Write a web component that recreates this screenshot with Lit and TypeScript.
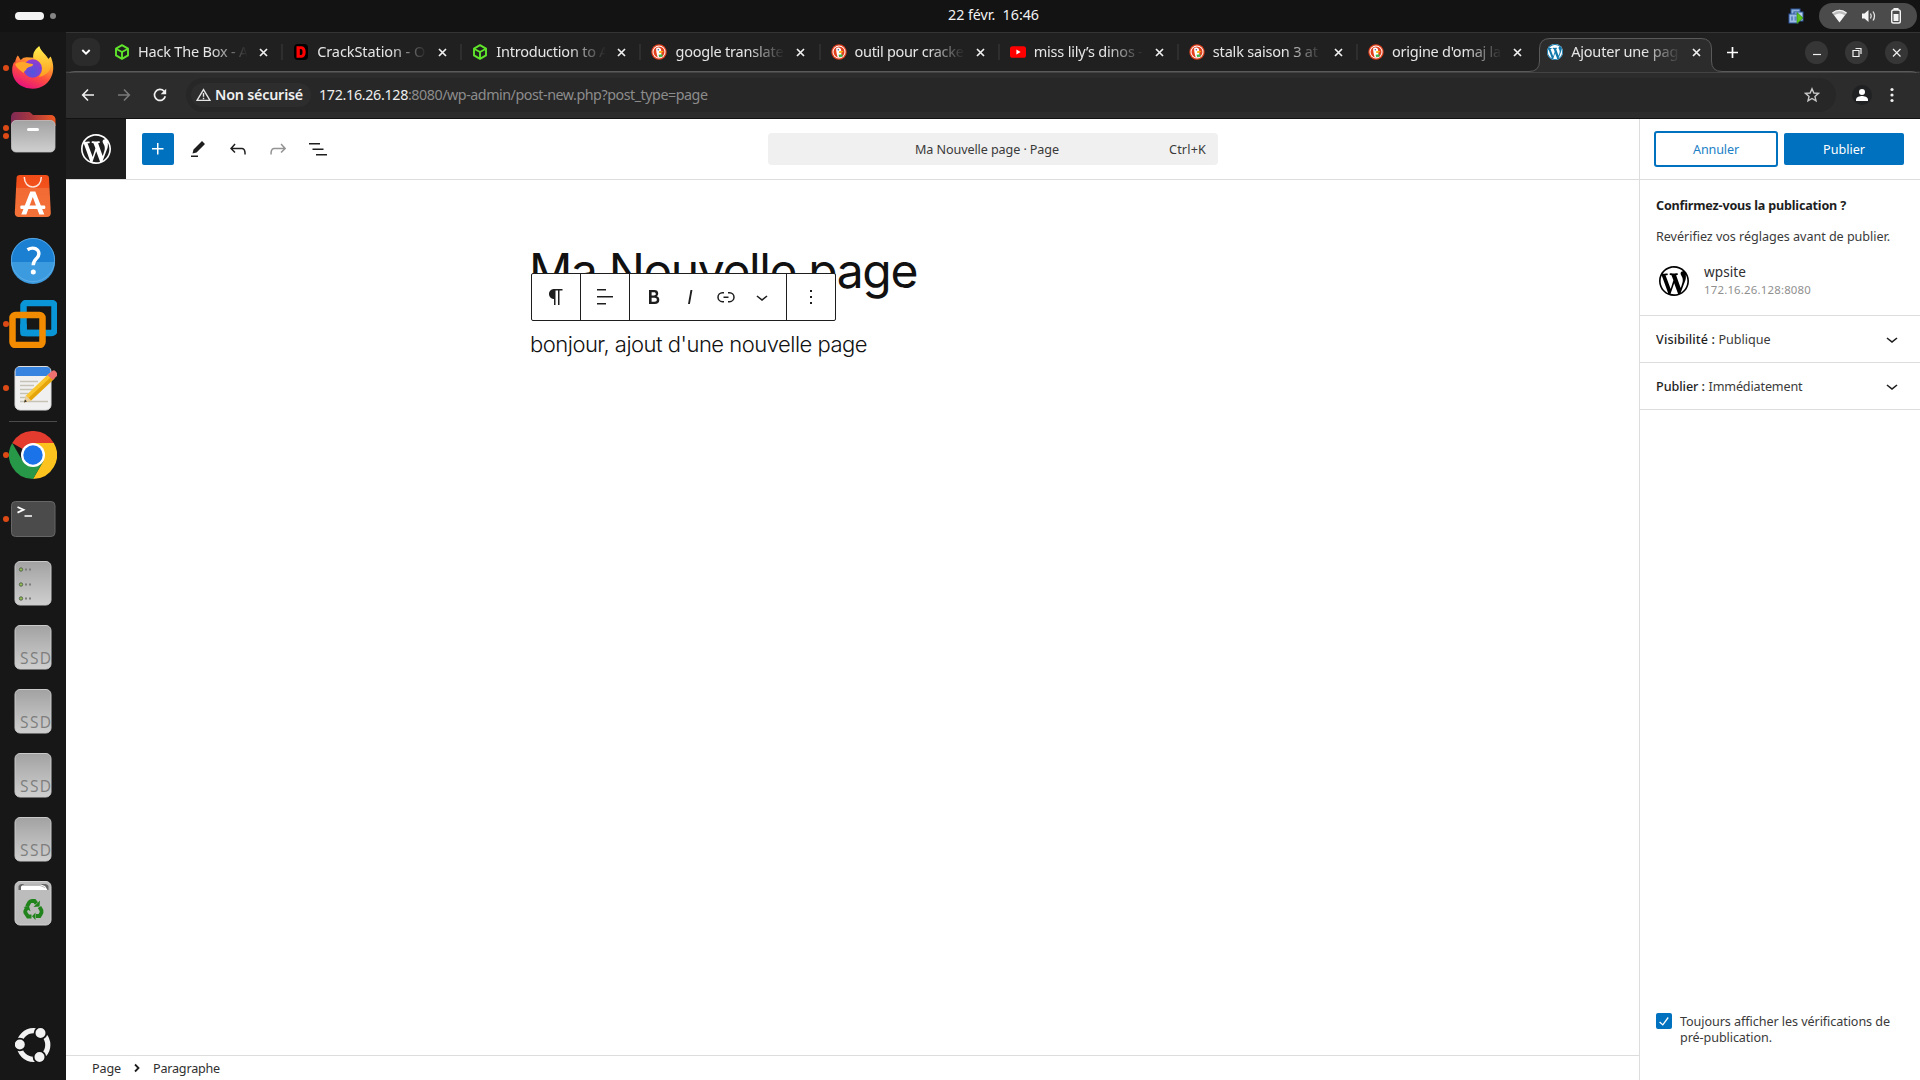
import { LitElement, html, css, svg } from "lit";
import { customElement, property } from "lit/decorators.js";
import { classMap } from "lit/directives/class-map.js";

const WP =
  "M20 10c0-5.51-4.49-10-10-10C4.48 0 0 4.49 0 10c0 5.52 4.48 10 10 10 5.51 0 10-4.48 10-10zM7.78 15.37L4.37 6.22c.55-.02 1.17-.08 1.17-.08.5-.06.44-1.13-.06-1.11 0 0-1.45.11-2.37.11-.18 0-.37 0-.58-.01C4.12 2.69 6.87 1.11 10 1.11c2.33 0 4.45.87 6.05 2.34-.68-.11-1.65.39-1.65 1.58 0 .74.45 1.36.9 2.1.35.61.55 1.36.55 2.46 0 1.49-1.4 5-1.4 5l-3.03-8.37c.54-.02.82-.17.82-.17.5-.05.44-1.25-.06-1.22 0 0-1.44.12-2.38.12-.87 0-2.33-.12-2.33-.12-.5-.03-.56 1.2-.06 1.22l.92.08 1.26 3.41zM17.41 10c.24-.64.74-1.87.43-4.25.7 1.29 1.05 2.71 1.05 4.25 0 3.29-1.73 6.24-4.4 7.78.97-2.59 1.94-5.2 2.92-7.78zM6.1 18.09C3.12 16.65 1.11 13.53 1.11 10c0-1.3.23-2.48.72-3.59C3.25 10.3 4.67 14.2 6.1 18.09zm4.03-6.63l2.58 6.98c-.86.29-1.76.45-2.71.45-.79 0-1.57-.11-2.29-.33.81-2.38 1.62-4.74 2.42-7.1z";

const P: Record<string, string> = {
  plus: "M11 12.5V17.5H12.5V12.5H17.5V11H12.5V6H11V11H6V12.5H11Z",
  edit: "m19 7-3-3-8.5 8.5-1 4 4-1L19 7Zm-7 11.5H5V20h7v-1.5Z",
  undo: "M18.3 11.7c-.6-.6-1.4-.9-2.3-.9H6.7l2.9-3.3-1.1-1-4.5 5L8.5 16l1-1-2.7-2.7H16c.5 0 .9.2 1.3.5 1 1 1 3.4 1 4.5v.3h1.5v-.2c0-1.5 0-4.3-1.5-5.7z",
  redo: "M15.6 6.5l-1.1 1 2.9 3.3H8c-.9 0-1.7.3-2.3.9-1.4 1.5-1.4 4.2-1.4 5.6v.2h1.5v-.3c0-1.1 0-3.5 1-4.5.3-.3.7-.5 1.3-.5h9.2L14.5 15l1.1 1.1 4.6-4.6-4.6-5z",
  list: "M3 6h11v1.5H3V6Zm3.5 5.5h11V13h-11v-1.5ZM21 17H10v1.5h11V17Z",
  paragraph: "m9.99609 14v-.2251l.00391.0001v6.225h1.5v-14.5h2.5v14.5h1.5v-14.5h3v-1.5h-8.50391c-2.76142 0-5 2.23858-5 5 0 2.7614 2.23858 5 5 5z",
  align: "M13 5.5H4V4h9v1.5Zm7 7H4V11h16v1.5Zm-7 7H4V18h9v1.5Z",
  bold: "M14.7 11.3c1-.6 1.5-1.6 1.5-3 0-2.3-1.3-3.4-4-3.4H7v14h5.8c1.4 0 2.5-.3 3.3-1 .8-.7 1.2-1.7 1.2-2.9.1-1.9-.8-3.1-2.6-3.7zm-5.1-4h2.3c.6 0 1.1.1 1.4.4.3.3.5.7.5 1.2s-.2 1-.5 1.2c-.3.3-.8.4-1.4.4H9.6V7.3zm4.6 9c-.4.3-1 .4-1.7.4H9.6v-3.9h2.9c.7 0 1.3.2 1.7.5.4.3.6.8.6 1.5s-.2 1.2-.6 1.5z",
  italic: "M12.5 5L10 19h1.9l2.5-14z",
  link: "M10 17.389H8.444A5.194 5.194 0 1 1 8.444 7H10v1.5H8.444a3.694 3.694 0 0 0 0 7.389H10v1.5ZM14 7h1.556a5.194 5.194 0 0 1 0 10.39H14v-1.5h1.556a3.694 3.694 0 0 0 0-7.39H14V7Zm-4.5 6h5v-1.5h-5V13Z",
  down: "M17.5 11.6L12 16l-5.5-4.4.9-1.2L12 14l4.5-3.6 1 1.2z",
  more: "M13 19h-2v-2h2v2zm0-6h-2v-2h2v2zm0-6h-2V5h2v2z",
};

const icon = (name: string, size = 24) =>
  html`<svg width=${size} height=${size} viewBox="0 0 24 24" fill="currentColor"><path d=${P[name]} /></svg>`;

const wpLogo = (size: number) =>
  html`<svg width=${size} height=${size} viewBox="0 0 20 20" fill="currentColor"><path d=${WP} /></svg>`;

/** A single line of text tracked so that it spans exactly `w` pixels. */
@customElement("fit-label")
export class FitLabel extends LitElement {
  @property() text = "";
  @property({ type: Number }) w = 0;
  static styles = css`
    :host { display: inline-block; white-space: pre; flex: none; }
  `;
  firstUpdated() {
    const span = this.renderRoot.querySelector("span")!;
    const natural = span.getBoundingClientRect().width;
    span.style.letterSpacing = `${(this.w - natural) / this.text.length}px`;
  }
  render() {
    return html`<span>${this.text}</span>`;
  }
}

const t = (text: string, w: number, cls = "") =>
  html`<fit-label class=${cls} .text=${text} .w=${w}></fit-label>`;

const fav: Record<string, unknown> = {
  htb: svg`<g fill="none" stroke="#5fe52b" stroke-width="1.9" stroke-linejoin="round"><path d="M8 1.2 14 4.6V11.4L8 14.8 2 11.4V4.6Z"/><path d="M2.4 5 8 8 13.6 5M8 8v6.4"/></g>`,
  crack: svg`<rect x="1" y="0" width="14" height="16" rx="4" fill="#000"/><path d="M3.500 2.200h4.700c2.900 0 4.500 1.900 4.500 5.800s-1.600 5.800-4.500 5.800h-4.700zM6.800 5v6.100h.9c1.300 0 1.800-.9 1.800-3.100s-.5-3-1.800-3z" fill="#f00" fill-rule="evenodd"/>`,
  duck: svg`<circle cx="8" cy="8" r="7.700" fill="#e2401c"/><circle cx="8" cy="8" r="6.500" fill="#fff"/><circle cx="8" cy="8" r="5.500" fill="#e2401c"/><path d="M5.200 4.200c1-1.200 3.800-1 4.600.8.700 1.600.3 3 .5 4.500l.4 3.400c-1.400.6-2.700.7-4 .3C6 10.700 4.800 6.600 5.200 4.200Z" fill="#fff"/><path d="M8 7.400c1.300-.6 3-.6 4.300 0-.8.8-2.200 1.500-4.100 1.500z" fill="#fdb813"/><circle cx="7.300" cy="5.700" r=".7" fill="#2d4f8e"/><path d="m7.600 10.800 3.700-.6.200 2.500-3.400.4z" fill="#35b54a"/>`,
  yt: svg`<rect x="0" y="2.200" width="16" height="11.600" rx="2.600" fill="#f00"/><path d="M6.400 5.600 10.600 8l-4.200 2.400z" fill="#fff"/>`,
  wp: svg`<circle cx="8" cy="8" r="8" fill="#fff"/><g transform="scale(.8)" fill="#1178ac"><path d=${WP}/></g>`,
};

const TABS: [string, string, number][] = [
  ["htb", "Hack The Box - A", 110],
  ["crack", "CrackStation - O", 108],
  ["htb", "Introduction to A", 112],
  ["duck", "google translate", 108],
  ["duck", "outil pour cracke", 109],
  ["yt", "miss lily’s dinos -", 109],
  ["duck", "stalk saison 3 at", 105],
  ["duck", "origine d'omaj la", 109],
  ["wp", "Ajouter une pag", 107],
];

const box = (body: unknown, w = 48) =>
  html`<svg width=${w} height="48" viewBox="0 0 48 48">${body}</svg>`;

const DRIVE = svg`<rect x="6" y="2.500" width="36" height="43.500" rx="5" fill="url(#gs)" stroke="#c9c9c9"/>`;
const GS = svg`<defs><linearGradient id="gs" x1="0" y1="0" x2="0" y2="1"><stop offset="0" stop-color="#a2a2a2"/><stop offset="1" stop-color="#cfcfcf"/></linearGradient></defs>`;
const ssd = svg`${GS}${DRIVE}<text x="11" y="41" font-family="Open Sans, sans-serif" font-size="15.500" textLength="31" fill="#7e7e7e">SSD</text>`;

const DOCK: { dots: number; art: unknown }[] = [
  { dots: 1, art: svg`
    <defs>
      <linearGradient id="ff" x1=".8" y1="0" x2=".35" y2="1"><stop offset="0" stop-color="#fff44f"/><stop offset=".35" stop-color="#ffa52a"/><stop offset=".65" stop-color="#ff4f3e"/><stop offset="1" stop-color="#e8127c"/></linearGradient>
      <radialGradient id="fp" cx=".5" cy=".7" r=".7"><stop offset="0" stop-color="#4f55dd"/><stop offset="1" stop-color="#9838cf"/></radialGradient>
      <linearGradient id="fy" x1="0" y1="0" x2="0" y2="1"><stop offset="0" stop-color="#fff04d"/><stop offset="1" stop-color="#ff9a20"/></linearGradient>
    </defs>
    <g transform="translate(-.8 0)"><path d="M9.500 11.500c1.600 1.200 1.700 3 3 4.500 1.800-2.200 4-2.700 6-2.800l8 .6 4-11.300c2 4.500 7.500 8 9.500 12.500l2.500-2.500c2.500 6 3.500 12 1.500 18-3 9-10.500 14.200-19.500 14.200C13 44.700 4 37 4 26c0-4 1-6.500 2.300-8.500l.5 2c.3-3.500 1-5.500 2.700-8Z" fill="url(#ff)"/>
    <path d="M31 2c-3.500 3-6.500 6-6 12 4 1.500 8 5 8.500 10.500.2 3-1 6-3 8.500 6-1 12-5 12-12-.5-7-9-11-11.500-19Z" fill="url(#fy)"/>
    <circle cx="24.500" cy="24.500" r="9.300" fill="url(#fp)"/>
    <path d="M7 20c4-2.500 8-3 12-1 3 .8 5.500.5 6 1.500-.5 2.500-6 2-7 5-1 1.500-2 1.500-2.500 3.500C12 26 8 24 7 20Z" fill="#ffa62b"/></g>` },
  { dots: 2, art: svg`
    <defs><linearGradient id="fo"><stop offset="0" stop-color="#7e2a55"/><stop offset=".45" stop-color="#a8373f"/><stop offset="1" stop-color="#f15a22"/></linearGradient></defs>
    <path d="M2 18V9c0-3 2-5 4.500-5h13c1.500 0 2 .5 3 1.600L24 7h17.500c3 0 5 2 5 4.500V18Z" fill="url(#fo)"/>
    ${GS}<rect x="2.500" y="12.500" width="43.500" height="31.500" rx="4.500" fill="url(#gs)" stroke="#c2c2c2" stroke-width=".8"/>
    <rect x="18" y="20" width="12" height="3" rx="1.500" fill="#fff"/>` },
  { dots: 0, art: svg`
    <defs><linearGradient id="ac" x1="0" y1="0" x2="0" y2="1"><stop offset="0" stop-color="#f04c17"/><stop offset=".3" stop-color="#f2521d"/><stop offset=".32" stop-color="#f26a34"/><stop offset="1" stop-color="#f47238"/></linearGradient></defs>
    <g transform="translate(-.7 0)"><path d="M11.500 3h26c2 0 3 1 3.200 2.800L42.500 41c0 2.500-1.500 4-4 4h-28c-2.500 0-4-1.500-4-4L8.300 5.800C8.500 4 9.500 3 11.500 3Z" fill="url(#ac)"/>
    <path d="M16 5c0 6 3.500 10 8.500 10S33 11 33 5" fill="none" stroke="#fbe3d8" stroke-width="1.500"/>
    <path d="M22 19.500h5l9 23h-5L24.500 25 18 42.500h-5Z" fill="#fff"/><rect x="12" y="33.500" width="25" height="3.500" rx="1.200" fill="#fff"/></g>` },
  { dots: 0, art: svg`
    <circle cx="24" cy="24" r="22" fill="#1c80d2"/><path d="M2 26a22 22 0 0 0 44 0Z" fill="#3c9ade"/><circle cx="24" cy="24" r="21.600" fill="none" stroke="#63b0e8" stroke-width=".8"/>
    <path d="M18.500 13.800c3-1.900 6-2.100 8.500-.9 3.500 1.800 3.700 6 1 9-2.300 2.400-3.800 3.500-3.800 7.300" fill="none" stroke="#fff" stroke-width="3.400"/><circle cx="24.300" cy="36" r="2.500" fill="#fff"/>` },
  { dots: 1, art: svg`
    <rect x="14.500" y="3" width="31" height="30" rx="3" fill="none" stroke="#0a95d6" stroke-width="6.500"/>
    <rect x="3.500" y="15" width="30" height="30" rx="3" fill="none" stroke="#f38b00" stroke-width="6.500"/>
    <path d="M14.500 24v9H30" fill="none" stroke="#0a95d6" stroke-width="6.500" stroke-linejoin="round"/>` },
  { dots: 1, art: svg`
    <rect x="6" y="2.500" width="36" height="43.500" rx="5" fill="#f0f0f0" stroke="#ddd"/><path d="M6.500 12V7q0-4 4-4h27q4 0 4 4v5Z" fill="#3684e0"/>
    <path d="M11 17.500h18M11 21.500h14M11 25.500h17M11 29.500h11M11 33.500h10M11 37.500h28" stroke="#c6c2b5" stroke-width="1.500"/>
    <path d="m15 38.500 2-7L40.500 9l5 5.500-23.500 22Z" fill="#f9c62e"/><path d="m19.500 34 23.500-22 2.500 2.500-23.500 22Z" fill="#e5a50a"/><path d="m15 38.500 2-7 5 5Z" fill="#e8cfa2"/><path d="m15 38.500 1-3 2 2Z" fill="#333"/>
    <path d="m38.500 11 5-4.300q1.500-1 2.800.2l2 2.500q1 1.300-.2 2.500L43.500 16Z" fill="#ef7070"/>` },
  { dots: 1, art: svg`
    <path d="M24 24 3.200 12A24 24 0 0 1 44.800 12Z" fill="#e33b2e"/><path d="M24 12H44.800A24 24 0 0 1 24 48l10.400-18Z" fill="#fcc31e"/><path d="M3.200 12 13.600 30 24 36h4.500L24 48A24 24 0 0 1 3.200 12Z" fill="#279847"/>
    <path d="M24 48 34.400 30 24 34Z" fill="#279847"/><circle cx="24" cy="24" r="12" fill="#fff"/><circle cx="24" cy="24" r="9.700" fill="#1a73e8"/>` },
  { dots: 1, art: svg`
    <rect x="2.500" y="6.500" width="43.500" height="35" rx="4" fill="#4b4b4b" stroke="#666"/>
    <path d="m8.500 12 6 2.800-6 2.800" fill="none" stroke="#fff" stroke-width="1.800"/><path d="M15.500 21h7.500" stroke="#fff" stroke-width="1.500"/>` },
  { dots: 0, art: svg`${GS}${DRIVE}${[10.5, 25.5, 39.5].map(
    (y) => svg`<circle cx="12" cy=${y} r="1.700" fill="#8cc152" stroke="#5a6350" stroke-width="1"/><path d=${`M16 ${y}h2M20 ${y}h2`} stroke="#7d7d7d" stroke-width="2"/>`
  )}` },
  { dots: 0, art: ssd },
  { dots: 0, art: ssd },
  { dots: 0, art: ssd },
  { dots: 0, art: ssd },
  { dots: 0, art: svg`${GS}<rect x="6" y="2.500" width="36" height="43.500" rx="5" fill="#bcbcbc" stroke="#d2d2d2"/>
    <path d="M9.500 11V7.500Q10 5 13 5h23q3 0 3.500 2.500V11Z" fill="#666"/><path d="M12 11V7.500l3-2h17l4 1.500 2.500 4Z" fill="#fff"/><path d="M14 6.500h17l5 2" stroke="#aaa" fill="none" stroke-width=".8"/>
    <g fill="none" stroke="#21831c" stroke-width="3.800"><path d="m18 27.500 2.500-4.500q1-1 2.500-1h2.500l2 2.500"/><path d="m30.500 28 2 3.500q.5 2-1 4l-1 1.500h-3.500"/><path d="M22.500 37.500H19l-2.700-4q-.3-1.500.7-3l1.500-2.500"/></g>
    <path d="m24.500 28 6-.5.500-6ZM26.500 33.500v7.500l-3.500-3.700ZM14.500 28l5.500-.8 1.500 5Z" fill="#21831c"/>` },
];

@customElement("app-root")
export class AppRoot extends LitElement {
  static styles = css`
    :host { display: block; width: 1920px; height: 1080px; overflow: hidden; background: #161616; color: #1e1e1e;
      font: 12.600px/20px "Noto Sans", "Open Sans", sans-serif; }
    * { box-sizing: border-box; }
    svg { display: block; flex: none; }
    .topbar { height: 32px; background: #131313; display: grid; grid-template-columns: 1fr auto 1fr; align-items: center; color: #f2f2f2; font-size: 14.300px; }
    .spaces { display: flex; align-items: center; gap: 6px; padding-left: 15px; }
    .pill { width: 29px; height: 8px; border-radius: 4px; background: #f4f4f4; }
    .dot { width: 6px; height: 6px; border-radius: 3px; background: #858585; }
    .clock { padding: 0 0 3px 67px; }
    .tray { display: flex; justify-content: flex-end; align-items: center; gap: 14px; padding-right: 3px; }
    .status { width: 98px; height: 26px; border-radius: 13px; background: #4b4b4b; display: flex; align-items: center; justify-content: space-between; padding: 0 15px 0 12px; }
    .body { display: flex; height: 1048px; }
    .dock { width: 66px; background: #171717; display: flex; flex-direction: column; padding-top: 4px; }
    .app { height: 64px; display: flex; align-items: center; flex: none; }
    .marks { width: 9px; display: flex; flex-direction: column; gap: 2px; align-items: flex-end; }
    .mark { width: 6px; height: 6px; border-radius: 3px; background: #dc4a16; }
    .rule { height: 1px; margin: 1px 9px 1px; background: #4b4b4b; flex: none; }
    .ubuntu { margin-top: auto; padding: 0 0 17px 15px; }
    .win { flex: 1; display: flex; flex-direction: column; min-width: 0; background: #202020; }
    .strip { height: 39px; border-top: 1px solid #343434; background: #202020; display: flex; align-items: center; position: relative; padding-left: 6px; flex: none; }
    .finder { width: 28px; height: 28px; border-radius: 9px; background: #2b2b2b; display: grid; place-items: center; margin-right: 4px; color: #fff; }
    .shape { position: absolute; left: 0; top: 0; }
    .tab { width: 179.150px; height: 28px; padding-left: 10px; display: flex; align-items: center; position: relative; font-size: 14.500px; color: #e6e6e6; flex: none; }
    .tick { width: 2px; height: 16px; background: #2e2e2e; margin-left: auto; }
    .tick.off { background: transparent; }
    .title { width: 112px; margin: -2px 9px 0 8px; overflow: hidden; -webkit-mask-image: linear-gradient(90deg, #000 65%, transparent 98%); mask-image: linear-gradient(90deg, #000 65%, transparent 98%); }
    .newtab { margin-left: 11px; position: relative; }
    .ctrls { margin-left: auto; display: flex; gap: 17px; padding-right: 12px; position: relative; }
    .ctrl { width: 23px; height: 23px; border-radius: 50%; background: #363636; }
    .nav { height: 48px; background: #2c2c2c; border-bottom: 1px solid #121212; display: flex; align-items: center; padding: 1px 0 0 14px; flex: none; }
    .navs { display: flex; gap: 20px; }
    .omni { width: 1650px; height: 34px; border-radius: 17px; margin-left: 18px; background: #272727; display: flex; align-items: center; padding: 0 16px 0 5px; font-size: 14.300px; color: #8c8c8c; }
    .chip { width: 120px; height: 24px; border-radius: 12px; background: #2d2d2d; display: flex; align-items: center; gap: 4px; padding-left: 5px; margin-right: 8px; color: #f0f0f0; }
    .medium { font-weight: 600; }
    .host { color: #eee; }
    .star { margin-left: auto; }
    .avatar { width: 20px; height: 20px; border-radius: 10px; background: #202122; margin: 0 18px 0 16px; }
    .wp { flex: 1; display: flex; background: #fff; min-height: 0; }
    .main { width: 1573px; display: flex; flex-direction: column; }
    .head { height: 61px; border-bottom: 1px solid #ddd; display: flex; align-items: center; flex: none; }
    .home { width: 60px; height: 60px; background: #1e1e1e; color: #fff; display: grid; place-items: center; align-self: flex-start; }
    .tools { display: flex; gap: 8px; margin-left: 16px; align-self: flex-start; padding-top: 14px; }
    .btn { width: 32px; height: 32px; display: grid; place-items: center; }
    .add { background: #0071be; color: #fff; border-radius: 2px; }
    .faint { color: #949494; }
    .cmd fit-label, .foot fit-label, .acts fit-label, .intro > fit-label, .row fit-label { margin: 1px 0 -1px; }
    .cmd { width: 450px; height: 32px; margin: 14px 0 0 434px; align-self: flex-start; background: #f0f0f0; border-radius: 4px; display: flex; align-items: center; padding: 0 12px 0 147px; justify-content: space-between; color: #3a3a3a; }
    .canvas { flex: 1; padding-left: 465px; position: relative; color: #111; font-family: Inter, sans-serif; }
    .h1 { font-size: 48px; line-height: 56px; padding-top: 63px; margin-left: -2px; font-weight: 400; height: 119px; }
    .para { font-size: 22px; line-height: 30px; font-weight: 300; margin: 30px 0 0 -1px; height: 30px; }
    .block { position: absolute; left: 465px; top: 93px; height: 48px; display: flex; border: 1px solid #1e1e1e; border-radius: 2px; background: #fff; color: #1e1e1e; }
    .seg { display: flex; align-items: center; justify-content: center; width: 48px; gap: 12px; box-sizing: content-box; }
    .seg.wide { width: 156px; }
    .seg + .seg { border-left: 1px solid #1e1e1e; }
    .foot { height: 25px; border-top: 1px solid #ddd; display: flex; align-items: center; padding-left: 26px; color: #2f2f2f; }
    .side { flex: 1; border-left: 1px solid #ddd; display: flex; flex-direction: column; color: #3a3a3a; }
    .acts { height: 61px; border-bottom: 1px solid #ddd; padding: 12px 0 0 14px; display: flex; gap: 6px; flex: none; }
    .cancel { width: 124px; height: 36px; border: 2px solid #0071be; border-radius: 3px; color: #1b7fc6; display: flex; justify-content: center; align-items: center; }
    .pub { width: 120px; height: 32px; margin-top: 2px; background: #0071be; color: #fff; border-radius: 2px; display: flex; justify-content: center; align-items: center; }
    .intro { height: 136px; padding: 15px 0 0 16px; border-bottom: 1px solid #ddd; flex: none; display: flex; flex-direction: column; }
    .bold { font-weight: 700; color: #1e1e1e; }
    .intro > .second { margin-top: 12px; }
    .site { display: flex; gap: 15px; padding: 17px 0 0 3px; align-items: center; color: #000; height: 52px; }
    .names { display: flex; flex-direction: column; color: #2f2f2f; margin-top: -1px; }
    .name { font-size: 13.600px; line-height: 18px; }
    .addr { font-size: 11.400px; line-height: 17px; color: #8f8f8f; }
    .row { height: 47px; border-bottom: 1px solid #ddd; display: flex; align-items: center; padding: 0 16px; flex: none; }
    .row .chev { margin-left: auto; color: #1e1e1e; }
    .dark { font-weight: 500; color: #1e1e1e; }
    .value { padding-left: 3.500px; }
    .opt { margin-top: auto; display: flex; gap: 8px; padding: 0 16px 34px; line-height: 16px; }
    .cb { width: 16px; height: 16px; border-radius: 2px; background: #0071be; margin-top: -1px; }
    .lines { display: flex; flex-direction: column; }
  `;

  private topbar() {
    return html`<div class="topbar">
      <div class="spaces"><div class="pill"></div><div class="dot"></div></div>
      <div class="clock">${t("22 févr.  16:46", 91)}</div>
      <div class="tray">
        <svg width="17" height="16" viewBox="0 0 17 16">
          <rect x="3" y="1" width="9" height="9" fill="#8fb0dd" stroke="#2c569a" /><rect x="6" y="4" width="9" height="9" fill="#b5cdec" stroke="#2c569a" />
          <rect x="1" y="6" width="9" height="9" fill="#9dbbe4" stroke="#2c569a" /><path d="M3 8.500h2v4H3zM6.500 8.500h2v4h-2z" fill="#5e87c4" /><path d="m9 4.500 6 5.500-6 5.500z" fill="#5fc41b" stroke="#2c8a0b" stroke-width=".6" />
        </svg>
        <div class="status">
          <svg width="17" height="16" viewBox="0 0 17 16"><path d="M1 4.800Q8.500-1.200 16 4.800L8.500 14.500Z" fill="#bdbdbd" /><path d="M1.500 5Q8.500-.2 15.500 5" stroke="#f4f4f4" fill="none" stroke-width="1.400" /><path d="M3.300 7.300q5.200-3.500 10.400 0L8.500 14.300Z" fill="#f4f4f4" /></svg>
          <svg width="16" height="16" viewBox="0 0 16 16"><path d="M1 5.500h2.500L7.500 2v12l-4-3.500H1Z" fill="#f4f4f4" /><path d="M9.500 5.500q1.500 2.500 0 5M12 3.500q3 4.500 0 9" fill="none" stroke="#e4e4e4" stroke-width="1.300" /></svg>
          <svg width="12" height="16" viewBox="0 0 12 16"><rect x="1.700" y="2" width="8.600" height="13" rx="1.800" fill="none" stroke="#f4f4f4" stroke-width="1.400" /><path d="M3.500 0h5v2h-5zM3.500 6h5v7h-5z" fill="#f4f4f4" /></svg>
        </div>
      </div>
    </div>`;
  }

  private dock() {
    return html`<div class="dock">
      ${DOCK.map(
        (d, i) => html`${i === 6 ? html`<div class="rule"></div>` : ""}
          <div class="app"><div class="marks">${Array.from({ length: d.dots }, () => html`<div class="mark"></div>`)}</div>${box(d.art)}</div>`
      )}
      <div class="ubuntu">
        <svg width="36" height="36" viewBox="0 0 36 36">
          <circle cx="18.500" cy="18" r="14.300" fill="none" stroke="#f2f2f2" stroke-width="5.200" />
          <g fill="#f2f2f2" stroke="#151515" stroke-width="1.800"><circle cx="4.800" cy="17.500" r="5.900" /><circle cx="25.500" cy="6" r="5.900" /><circle cx="24.500" cy="30" r="5.900" /></g>
        </svg>
      </div>
    </div>`;
  }

  private strip() {
    return html`<div class="strip">
      <svg class="shape" width="1854" height="40" viewBox="0 0 1854 40">
        <path d="M0 40V47Q0 38.500 9 38.500H1463Q1473.500 38.500 1473.500 28V16Q1473.500 5.500 1484 5.500H1635Q1645.500 5.500 1645.500 16V28Q1645.500 38.500 1656 38.500H1845Q1853.500 38.500 1853.500 47V40Z" fill="#2c2c2c" stroke="#5a5a5a" />
      </svg>
      <div class="finder"><svg width="10" height="8" viewBox="0 0 10 8"><path d="m1.300 2 3.700 3.700L8.700 2" fill="none" stroke="currentColor" stroke-width="1.900" /></svg></div>
      ${TABS.map(
        ([k, title, w], i) => html`<div class="tab">
          <svg width="16" height="16" viewBox="0 0 16 16">${fav[k]}</svg>
          <div class="title">${t(title, w)}</div>
          <svg width="9" height="9" viewBox="0 0 9 9"><path d="m1 1 7 7M8 1 1 8" stroke="#f0f0f0" stroke-width="1.700" /></svg>
          <div class=${classMap({ tick: true, off: i > 6 })}></div>
        </div>`
      )}
      <div class="newtab"><svg width="11" height="11" viewBox="0 0 11 11"><path d="M5.500 0v11M0 5.500h11" stroke="#fff" stroke-width="1.700" /></svg></div>
      <div class="ctrls">
        ${["M8 13.500h8", "M8 9.500h6v6H8zM10.500 7.500h5.500v5.500", "m8 8 7.500 7.500M15.500 8 8 15.500"].map(
          (d) => html`<div class="ctrl"><svg width="23" height="23" viewBox="0 0 23 23"><path d=${d} fill="none" stroke="#f0f0f0" stroke-width="1.200" /></svg></div>`
        )}
      </div>
    </div>`;
  }

  private nav() {
    return html`<div class="nav">
      <div class="navs">
        <svg width="16" height="16" viewBox="0 0 16 16"><path d="M14 8H3M8 2.500 2.700 8 8 13.500" fill="none" stroke="#f0f0f0" stroke-width="1.600" /></svg>
        <svg width="16" height="16" viewBox="0 0 16 16"><path d="M2 8h11M8 2.500 13.300 8 8 13.500" fill="none" stroke="#7a7a7a" stroke-width="1.600" /></svg>
        <svg width="16" height="16" viewBox="0 0 16 16"><path d="M13.300 9.300A5.500 5.500 0 1 1 12 4.200L13.500 6" fill="none" stroke="#f0f0f0" stroke-width="1.700" /><path d="M14.200 1.700v5.500H8.700z" fill="#f0f0f0" /></svg>
      </div>
      <div class="omni">
        <div class="chip">
          <svg width="15" height="14" viewBox="0 0 15 14"><path d="M7.500 1.600 14 12.400H1Z" fill="none" stroke="#e6e6e6" stroke-width="1.400" /><path d="M7.500 5v3.800M7.500 9.700v1.500" stroke="#e6e6e6" stroke-width="1.400" /></svg>
          ${t("Non sécurisé", 88, "medium")}
        </div>
        ${t("172.16.26.128", 89, "host")}${t(":8080/wp-admin/post-new.php?post_type=page", 299.5)}
        <svg class="star" width="16" height="16" viewBox="0 0 16 16"><path d="m8 1.800 1.850 4.200 4.550.4-3.450 3 1.050 4.500L8 11.500l-4 2.400 1.050-4.500-3.450-3 4.550-.4z" fill="none" stroke="#c8c8c8" stroke-width="1.400" /></svg>
      </div>
      <div class="avatar"><svg width="20" height="20" viewBox="0 0 20 20"><circle cx="10" cy="7" r="3" fill="#fff" /><path d="M4 16v-1.500c0-2.500 4-3.500 6-3.500s6 1 6 3.500V16Z" fill="#fff" /></svg></div>
      <svg width="4" height="16" viewBox="0 0 4 16" fill="#f0f0f0"><circle cx="2" cy="2.500" r="1.600" /><circle cx="2" cy="8" r="1.600" /><circle cx="2" cy="13.500" r="1.600" /></svg>
    </div>`;
  }

  render() {
    return html`${this.topbar()}
      <div class="body">
        ${this.dock()}
        <div class="win">
          ${this.strip()} ${this.nav()}
          <div class="wp">
            <div class="main">
              <div class="head">
                <div class="home">${wpLogo(30)}</div>
                <div class="tools">
                  <div class="btn add">${icon("plus")}</div>
                  <div class="btn">${icon("edit")}</div>
                  <div class="btn">${icon("undo")}</div>
                  <div class="btn faint">${icon("redo")}</div>
                  <div class="btn">${icon("list")}</div>
                </div>
                <div class="cmd">${t("Ma Nouvelle page · Page", 144)}${t("Ctrl+K", 37)}</div>
              </div>
              <div class="canvas">
                <div class="h1">${t("Ma Nouvelle page", 388)}</div>
                <div class="para">${t("bonjour, ajout d'une nouvelle page", 337)}</div>
                <div class="block">
                  <div class="seg">${icon("paragraph")}</div>
                  <div class="seg">${icon("align")}</div>
                  <div class="seg wide">${icon("bold")}${icon("italic")}${icon("link")}${icon("down")}</div>
                  <div class="seg">${icon("more")}</div>
                </div>
              </div>
              <div class="foot">
                ${t("Page", 29)}
                <svg width="32" height="10" viewBox="0 0 32 10"><path d="m14 1.500 3.500 3.500L14 8.500" fill="none" stroke="#1e1e1e" stroke-width="1.800" /></svg>
                ${t("Paragraphe", 67)}
              </div>
            </div>
            <div class="side">
              <div class="acts">
                <div class="cancel">${t("Annuler", 46)}</div>
                <div class="pub">${t("Publier", 42)}</div>
              </div>
              <div class="intro">
                ${t("Confirmez-vous la publication ?", 190, "bold")}
                ${t("Revérifiez vos réglages avant de publier.", 234, "second")}
                <div class="site">
                  ${wpLogo(30)}
                  <div class="names">${t("wpsite", 42, "name")}${t("172.16.26.128:8080", 107, "addr")}</div>
                </div>
              </div>
              <div class="row">${t("Visibilité :", 59, "dark")}${t("Publique", 52, "value")}<div class="chev">${icon("down")}</div></div>
              <div class="row">${t("Publier :", 49, "dark")}${t("Immédiatement", 94, "value")}<div class="chev">${icon("down")}</div></div>
              <div class="opt">
                <div class="cb"><svg width="16" height="16" viewBox="0 0 16 16"><path d="m3.600 9 3.200 2.900 5.400-7.400" fill="none" stroke="#fff" stroke-width="1.300" /></svg></div>
                <div class="lines">${t("Toujours afficher les vérifications de", 210)}${t("pré-publication.", 92)}</div>
              </div>
            </div>
          </div>
        </div>
      </div>`;
  }
}
